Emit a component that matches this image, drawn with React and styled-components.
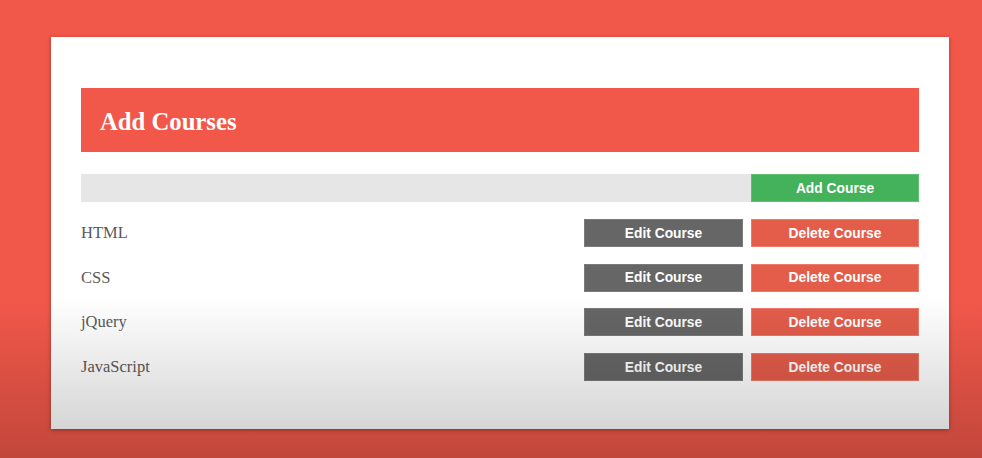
import React from "react";
import styled, { createGlobalStyle } from "styled-components";

const courses = ["HTML", "CSS", "jQuery", "JavaScript"];

const App = () => {
  return (
    <Page>
      <GlobalStyle />
      <Card>
        <Header>
          <Title>Add Courses</Title>
        </Header>
        <Toolbar>
          <ToolbarFill />
          <Button variant="add">Add Course</Button>
        </Toolbar>
        <CourseList>
          {courses.map((course) => (
            <CourseRow key={course}>
              <CourseName>{course}</CourseName>
              <Actions>
                <Button variant="edit">Edit Course</Button>
                <Button variant="delete">Delete Course</Button>
              </Actions>
            </CourseRow>
          ))}
        </CourseList>
      </Card>
      <Shade />
    </Page>
  );
};

export default App;

const GlobalStyle = createGlobalStyle`
  html, body {
    margin: 0;
    padding: 0;
  }

  body {
    font-family: "Liberation Serif", serif;
  }
`;

const Page = styled.div`
  position: relative;
  box-sizing: border-box;
  width: 982px;
  height: 458px;
  padding: 37px 33px 0 51px;
  overflow: hidden;
  background-color: #f2584a;
`;

const Card = styled.div`
  box-sizing: border-box;
  width: 898px;
  height: 392px;
  padding: 51px 30px 0 30px;
  background-color: #ffffff;
  box-shadow: 0 1px 4px rgba(0, 0, 0, 0.35);
`;

const Header = styled.div`
  box-sizing: border-box;
  display: flex;
  align-items: center;
  height: 64px;
  padding: 3px 19px 0 19px;
  background-color: #f2584a;
`;

const Title = styled.h1`
  margin: 0;
  font-family: "Liberation Serif", serif;
  font-size: 24.7px;
  font-weight: bold;
  color: #ffffff;
`;

const Toolbar = styled.div`
  display: flex;
  height: 28px;
  margin-top: 22px;
`;

const ToolbarFill = styled.div`
  flex: 1;
  background-color: #e6e6e6;
`;

const buttonColors = {
  add: { bg: "#43b25a", border: "#5cc172", width: "168px" },
  edit: { bg: "#666666", border: "#7a7a7a", width: "159px" },
  delete: { bg: "#e45c4a", border: "#ee7a6a", width: "168px" },
};

const Button = styled.button`
  box-sizing: border-box;
  width: ${(props) => buttonColors[props.variant].width};
  height: 28px;
  padding: 0;
  border: 1px solid ${(props) => buttonColors[props.variant].border};
  font-family: "Liberation Sans", Arial, sans-serif;
  font-size: 13.8px;
  font-weight: bold;
  color: #ffffff;
  background-color: ${(props) => buttonColors[props.variant].bg};
  cursor: pointer;
`;

const CourseList = styled.div`
  display: flex;
  flex-direction: column;
  gap: 16.7px;
  margin-top: 17px;
`;

const CourseRow = styled.div`
  display: flex;
  align-items: center;
  justify-content: space-between;
  height: 28px;
`;

const CourseName = styled.span`
  font-family: "Liberation Serif", serif;
  font-size: 16.5px;
  color: #5a5a5a;
`;

const Actions = styled.div`
  display: flex;
  gap: 8px;
`;

const Shade = styled.div`
  position: absolute;
  inset: 0;
  pointer-events: none;
  background: linear-gradient(
    to bottom,
    rgba(0, 0, 0, 0) 0%,
    rgba(0, 0, 0, 0) 65%,
    rgba(0, 0, 0, 0.2) 100%
  );
`;
